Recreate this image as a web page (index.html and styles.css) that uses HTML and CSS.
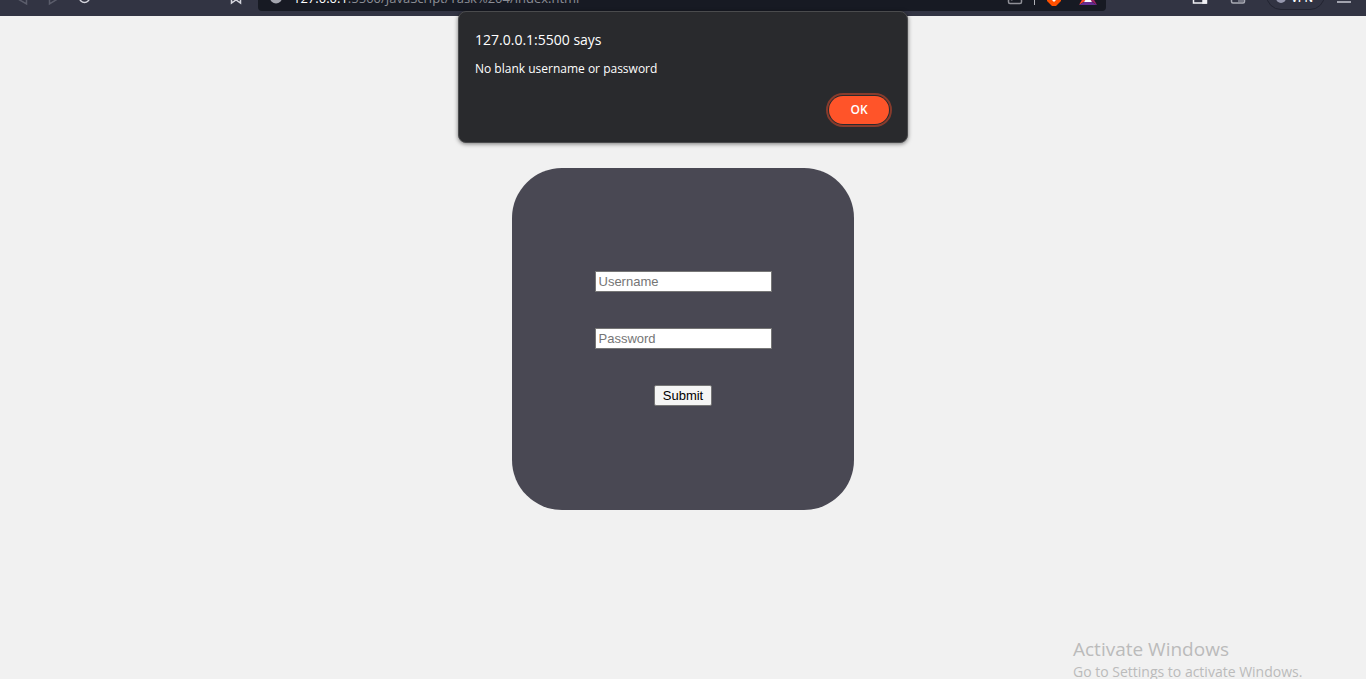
FILE: index.html
```html
<!DOCTYPE html>
<html lang="en">
<head>
<meta charset="utf-8">
<meta name="viewport" content="width=device-width, initial-scale=1">
<title>Login</title>
<link rel="stylesheet" href="styles.css">
</head>
<body>
<header class="toolbar">
  <div class="nav">
    <svg class="icon dim" viewBox="0 0 20 32"><path d="M14.500 15v10L6 20z"/></svg>
    <svg class="icon dim" viewBox="0 0 20 32"><path d="M6.500 15v10l8-5z"/></svg>
    <svg class="icon" viewBox="0 0 20 32"><circle cx="10.500" cy="18.500" r="5"/></svg>
    <svg class="icon bookmark" viewBox="0 0 20 32"><path d="M5.500 12v12l4.500-3 4.500 3V12z"/></svg>
  </div>
  <div class="address">
    <svg class="icon info" viewBox="0 0 20 32"><circle cx="10" cy="18.500" r="6"/></svg>
    <span class="url"><span class="host">127.0.0.1</span>:5500/JavaScript/Task%204/index.html</span>
    <div class="extras">
      <svg class="icon share" viewBox="0 0 20 32"><path d="M3.500 14v9q0 1.500 1.500 1.500h10q1.500 0 1.500-1.500v-9M6.500 21.500q1-3 4-3"/></svg>
      <span class="divider"></span>
      <svg class="icon solid" viewBox="0 0 20 32"><path fill="#ff5000" d="M3 14h14v8l-3 3-2 2H8l-2-2-3-3z"/><path fill="#fff" d="M8 20h4v1l-2 2-2-2z"/></svg>
      <svg class="icon solid" viewBox="0 0 20 32"><path fill="#ff4724" d="M10 10 1 26l6-4z"/><path fill="#9e1f63" d="m10 10 9 16-6-4z"/><path fill="#662d91" d="M1 26h18l-5-3H6z"/><path fill="#fff" d="m10 17 4 6H6z"/></svg>
    </div>
  </div>
  <div class="actions">
    <svg class="icon light" viewBox="0 0 20 32"><path d="M3.500 14h13v10h-13z"/><path class="fill" d="M13 21h3v3h-3z"/></svg>
    <svg class="icon soft" viewBox="0 0 20 32"><path d="M3.500 14v8.500q0 1.500 1.500 1.500h10q1.500 0 1.500-1.500V14z"/><path class="tint" d="M10 20h6v3h-6z"/></svg>
    <button class="vpn" type="button"><span class="dot"></span>VPN</button>
    <svg class="icon menu" viewBox="0 0 20 32"><path d="M3 14.500h14M3 18.500h14M3 23h14"/></svg>
  </div>
</header>
<main class="page">
  <form class="card">
    <input class="field" type="text" placeholder="Username" aria-label="Username">
    <input class="field" type="password" placeholder="Password" aria-label="Password">
    <button class="submit" type="button">Submit</button>
  </form>
</main>
<section class="dialog" role="alertdialog" aria-labelledby="dialog-title" aria-describedby="dialog-text">
  <h1 class="dialog-title" id="dialog-title">127.0.0.1:5500 says</h1>
  <p class="dialog-text" id="dialog-text">No blank username or password</p>
  <button class="ok" type="button">OK</button>
</section>
<aside class="watermark">
  <p class="watermark-title">Activate Windows</p>
  <p class="watermark-text">Go to Settings to activate Windows.</p>
</aside>
</body>
</html>
```
FILE: styles.css
```css
* { box-sizing: border-box; }

body {
  position: relative;
  display: flex;
  flex-direction: column;
  height: 100vh;
  margin: 0;
  overflow: hidden;
  background: #f1f1f1;
  font-family: "Segoe UI", "Open Sans", "Noto Sans", sans-serif;
}

/* Browser bar: only its lower strip is in view */
.toolbar {
  display: flex;
  flex: none;
  align-items: flex-end;
  height: 16px;
  padding: 0 12px 5px;
  overflow: hidden;
  background: #323443;
}

.icon {
  flex: none;
  width: 20px;
  height: 32px;
  fill: none;
  stroke: #d5d5dd;
  stroke-width: 1.5;
}

.icon.dim { stroke: #5b5d6b; }
.icon.info { fill: #a3a5ae; stroke: none; }
.icon.share { stroke: #8f9097; }
.icon.solid { stroke: none; }
.icon.light { stroke: #f0f0f4; }
.icon.soft { stroke: #a9aab4; }
.icon.menu { stroke: #c7c8d2; }
.icon .fill { fill: #f0f0f4; }
.icon .tint { fill: #70727f; stroke: none; }

.nav {
  display: flex;
  gap: 11px;
  width: 234px;
}

.bookmark { margin-left: auto; }

.address {
  display: flex;
  flex: 1;
  height: 32px;
  margin: 0 84px 0 12px;
  padding: 0 8px;
  border-radius: 4px;
  background: #171a23;
}

.url {
  margin-left: 7px;
  padding-top: 9px;
  color: #8b8d95;
  font-size: 13px;
  line-height: 20px;
  white-space: nowrap;
}

.host { color: #fff; }

.extras {
  display: flex;
  gap: 9px;
  margin-left: auto;
}

.extras .icon:last-child { margin-left: 5px; }

.divider {
  width: 1px;
  height: 26px;
  background: #b0b1b7;
}

.actions {
  display: flex;
  gap: 18px;
}

.vpn {
  display: flex;
  align-items: center;
  gap: 5px;
  width: 59px;
  height: 31px;
  padding: 7px 9px 0;
  border: 1px solid #222431;
  border-radius: 15px;
  background: transparent;
  color: #fff;
  font: 600 11px/14px "Segoe UI", "Open Sans", sans-serif;
}

.dot {
  flex: none;
  width: 10px;
  height: 10px;
  border-radius: 50%;
  background: #9698ae;
}

.icon.menu { margin-left: -9px; }

.page {
  display: flex;
  flex: 1;
  align-items: center;
  justify-content: center;
  padding-bottom: 17px;
}

.card {
  display: flex;
  flex-direction: column;
  align-items: center;
  gap: 36px;
  width: 342px;
  padding: 103px 20px 104px;
  border-radius: 50px;
  background: #494853;
}

.field,
.submit {
  height: 21px;
  border: 1px solid #767676;
  font: 13px/15px "Liberation Sans", Arial, sans-serif;
}

.field {
  width: 177px;
  padding: 1px 3px;
  background: #fff;
}

.field::placeholder { color: #757575; }

.submit {
  width: 58px;
  padding: 1px 6px;
  border-radius: 2px;
  background: #f5f5f5;
  color: #000;
}

.dialog {
  position: absolute;
  top: 11px;
  left: 50%;
  display: flex;
  flex-direction: column;
  width: 450px;
  padding: 18px 18px 18px 16px;
  transform: translateX(-50%);
  border: 1px solid #4a4b4d;
  border-radius: 8px;
  background: #292a2d;
  box-shadow: 0 1px 4px rgba(0, 0, 0, 0.5);
  color: #fff;
}

.dialog-title,
.dialog-text { margin: 0; font-weight: 400; }
.dialog-title { font-size: 14px; line-height: 20px; }
.dialog-text { margin-top: 10px; font-size: 12px; line-height: 18px; }

.ok {
  align-self: flex-end;
  width: 60px;
  height: 28px;
  margin-top: 18px;
  border: 0;
  border-radius: 14px;
  outline: 2px solid #873b2c;
  outline-offset: 1px;
  background: #ff5429;
  color: #fff;
  font: 600 12px/16px "Segoe UI", "Open Sans", sans-serif;
}

.watermark {
  position: absolute;
  right: 16px;
  bottom: -3px;
  width: 277px;
  color: #bbb;
  white-space: nowrap;
}

.watermark p { margin: 0; }
.watermark-title { font-size: 19px; line-height: 25px; }
.watermark-text { font-size: 14px; line-height: 20px; }
```
